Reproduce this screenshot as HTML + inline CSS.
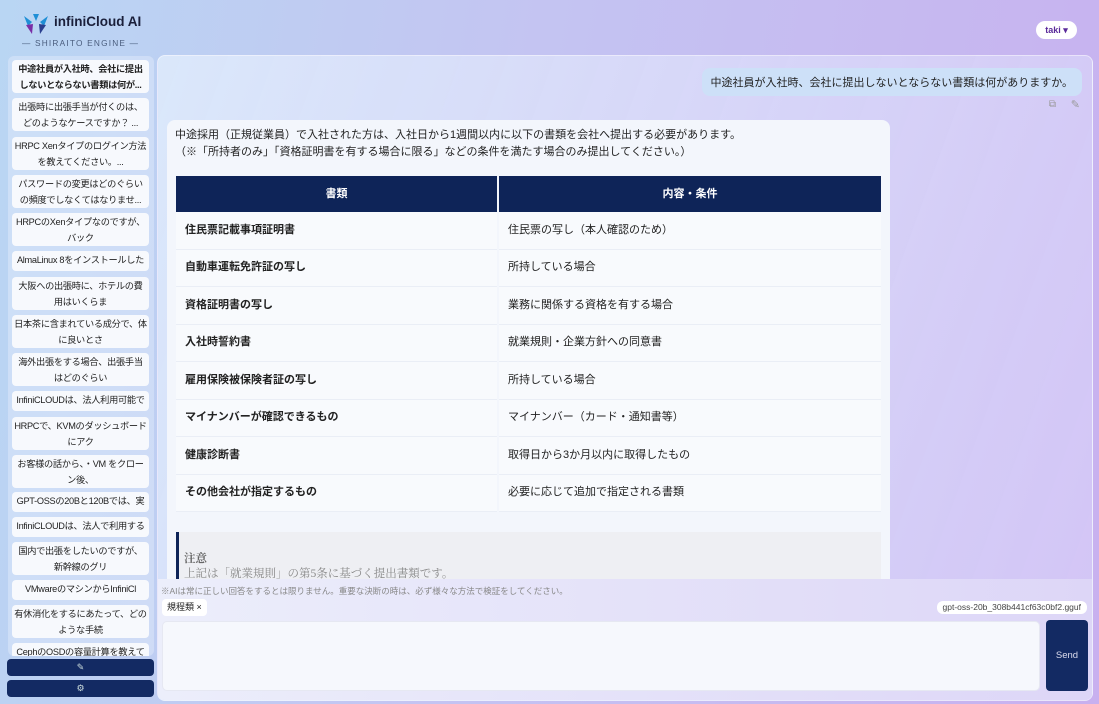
<!DOCTYPE html>
<html><head><meta charset="utf-8"><style>
*{box-sizing:border-box;margin:0;padding:0}
body{width:1099px;height:704px;overflow:hidden;font-family:"Liberation Sans","Noto Sans CJK JP",sans-serif;background:linear-gradient(100deg,#b9d6f3 0%,#c4c4f2 45%,#c8b0ef 100%);position:relative;color:#222}
.logo{position:absolute;left:22px;top:10px}
.sidebar{position:absolute;left:8px;top:56px;width:146px;height:600px;overflow:hidden;background:rgba(220,232,250,.55);border-radius:6px}
.item{position:absolute;left:4px;width:137px;background:#f7f9fd;border-radius:4px;font-size:9.2px;letter-spacing:-0.3px;line-height:16px;text-align:center;color:#222;padding:1px 2px;overflow:hidden}
.one{white-space:nowrap}
.btn{position:absolute;left:7px;width:147px;height:17px;background:#132a63;border-radius:4px;color:#cdd;font-size:9px;text-align:center;line-height:17px}
.main{position:absolute;left:157px;top:55px;width:936px;height:646px;border-radius:8px;background:linear-gradient(110deg,rgba(225,237,252,.8),rgba(215,205,248,.7));overflow:hidden;border:1px solid rgba(255,255,255,.5)}
.umsg{position:absolute;right:10px;top:12px;background:#cde0f8;border-radius:8px;font-size:11px;padding:6px 9px;color:#222}
.card{position:absolute;left:9px;top:64px;width:723px;height:470px;background:#f3f6fc;border-radius:8px;padding:7px 8px;font-size:11px;line-height:17px}
table{position:absolute;left:7px;top:56px;width:709px;border-collapse:separate;border-spacing:2px 0}
th{background:#0e2458;color:#fff;font-size:11px;height:36px;font-weight:bold}
td{height:37.5px;font-size:11px;padding-left:9px;border-bottom:1px solid #eaeef6;background:#f8fafd}
td.b{font-weight:bold}
.note{position:absolute;left:9px;top:412px;width:705px;height:60px;background:#eeeff3;border-left:3px solid #0e2458;padding:20px 5px;font-family:"Liberation Serif","Noto Serif CJK SC",serif;font-size:11.5px;color:#888;line-height:15px}
.bottom{position:absolute;left:0;top:523px;width:936px;height:123px;background:linear-gradient(90deg,#eceefb,#ddd6f7)}
</style></head><body>
<div class="logo">
<svg width="28" height="24" viewBox="0 0 28 24" style="position:absolute;left:0;top:2px"><path d="M2 4 L10 10 L6 14Z" fill="#1f8fd6"/><path d="M26 4 L18 10 L22 14Z" fill="#1f8fd6"/><path d="M11 2 L14 9 L17 2 Z" fill="#1f8fd6"/><path d="M4 13 L11 12 L10 22Z" fill="#7a2ea6"/><path d="M24 13 L17 12 L18 22Z" fill="#2a3f8f"/></svg>
<div style="position:absolute;left:32px;top:4px;font-size:13.5px;font-weight:bold;color:#1a1f3a;white-space:nowrap">infiniCloud AI</div>
<div style="position:absolute;left:0;top:28px;font-size:8.3px;letter-spacing:1.2px;color:#4a5d7e;white-space:nowrap">— SHIRAITO ENGINE —</div>
</div>
<div style="position:absolute;left:1036px;top:21px;width:41px;height:18px;background:#fff;border-radius:9px;font-size:9px;font-weight:bold;color:#5a2a9a;text-align:center;line-height:18px">taki ▾</div>
<div class="sidebar">
<div class="item" style="top:4px;height:33px;font-weight:bold">中途社員が入社時、会社に提出しないとならない書類は何が...</div>
<div class="item" style="top:42px;height:33px">出張時に出張手当が付くのは、どのようなケースですか？ ...</div>
<div class="item" style="top:81px;height:33px">HRPC Xenタイプのログイン方法を教えてください。...</div>
<div class="item" style="top:119px;height:33px">パスワードの変更はどのぐらいの頻度でしなくてはなりませ...</div>
<div class="item" style="top:157px;height:33px">HRPCのXenタイプなのですが、バック</div>
<div class="item one" style="top:195px;height:20px">AlmaLinux 8をインストールした</div>
<div class="item" style="top:221px;height:33px">大阪への出張時に、ホテルの費用はいくらま</div>
<div class="item" style="top:259px;height:33px">日本茶に含まれている成分で、体に良いとさ</div>
<div class="item" style="top:297px;height:33px">海外出張をする場合、出張手当はどのぐらい</div>
<div class="item one" style="top:335px;height:20px">InfiniCLOUDは、法人利用可能で</div>
<div class="item" style="top:361px;height:33px">HRPCで、KVMのダッシュボードにアク</div>
<div class="item" style="top:399px;height:33px">お客様の話から、・VM をクローン後、</div>
<div class="item one" style="top:436px;height:20px">GPT-OSSの20Bと120Bでは、実</div>
<div class="item one" style="top:461px;height:20px">InfiniCLOUDは、法人で利用する</div>
<div class="item" style="top:486px;height:33px">国内で出張をしたいのですが、新幹線のグリ</div>
<div class="item one" style="top:524px;height:20px">VMwareのマシンからInfiniCl</div>
<div class="item" style="top:549px;height:33px">有休消化をするにあたって、どのような手続</div>
<div class="item one" style="top:587px;height:33px">CephのOSDの容量計算を教えて</div>
</div>
<div class="btn" style="top:659px">✎</div>
<div class="btn" style="top:680px">⚙</div>
<div class="main">
<div class="umsg">中途社員が入社時、会社に提出しないとならない書類は何がありますか。</div>
<div style="position:absolute;right:36px;top:43px;font-size:10px;color:#999">⧉</div>
<div style="position:absolute;right:12px;top:42px;font-size:11px;color:#999">✎</div>
<div class="card">
中途採用（正規従業員）で入社された方は、入社日から1週間以内に以下の書類を会社へ提出する必要があります。<br>（※「所持者のみ」「資格証明書を有する場合に限る」などの条件を満たす場合のみ提出してください。）
<table>
<tr><th style="width:321px">書類</th><th>内容・条件</th></tr>
<tr><td class="b">住民票記載事項証明書</td><td>住民票の写し（本人確認のため）</td></tr>
<tr><td class="b">自動車運転免許証の写し</td><td>所持している場合</td></tr>
<tr><td class="b">資格証明書の写し</td><td>業務に関係する資格を有する場合</td></tr>
<tr><td class="b">入社時誓約書</td><td>就業規則・企業方針への同意書</td></tr>
<tr><td class="b">雇用保険被保険者証の写し</td><td>所持している場合</td></tr>
<tr><td class="b">マイナンバーが確認できるもの</td><td>マイナンバー（カード・通知書等）</td></tr>
<tr><td class="b">健康診断書</td><td>取得日から3か月以内に取得したもの</td></tr>
<tr><td class="b">その他会社が指定するもの</td><td>必要に応じて追加で指定される書類</td></tr>
</table>
<div class="note"><b style="color:#666">注意</b><br>上記は「就業規則」の第5条に基づく提出書類です。</div>
</div>
<div class="bottom">
<div style="position:absolute;left:3px;top:6px;font-size:8.5px;color:#888">※AIは常に正しい回答をするとは限りません。重要な決断の時は、必ず様々な方法で検証をしてください。</div>
<div style="position:absolute;left:4px;top:20px;background:#fff;border-radius:4px;font-size:9px;padding:2px 5px;line-height:13px">規程類 ×</div>
<div style="position:absolute;right:7px;top:22px;background:#fff;border-radius:6px;font-size:8.5px;padding:1px 6px;line-height:11px;color:#444">gpt-oss-20b_308b441cf63c0bf2.gguf</div>
<div style="position:absolute;left:4px;top:42px;width:878px;height:70px;background:#f6f8fd;border-radius:5px;border:1px solid #e6e8f2"></div>
<div style="position:absolute;left:888px;top:41px;width:42px;height:71px;background:#132a63;border-radius:4px;color:#dde;font-size:9.5px;text-align:center;line-height:71px">Send</div>
</div>
</div>
</body></html>
